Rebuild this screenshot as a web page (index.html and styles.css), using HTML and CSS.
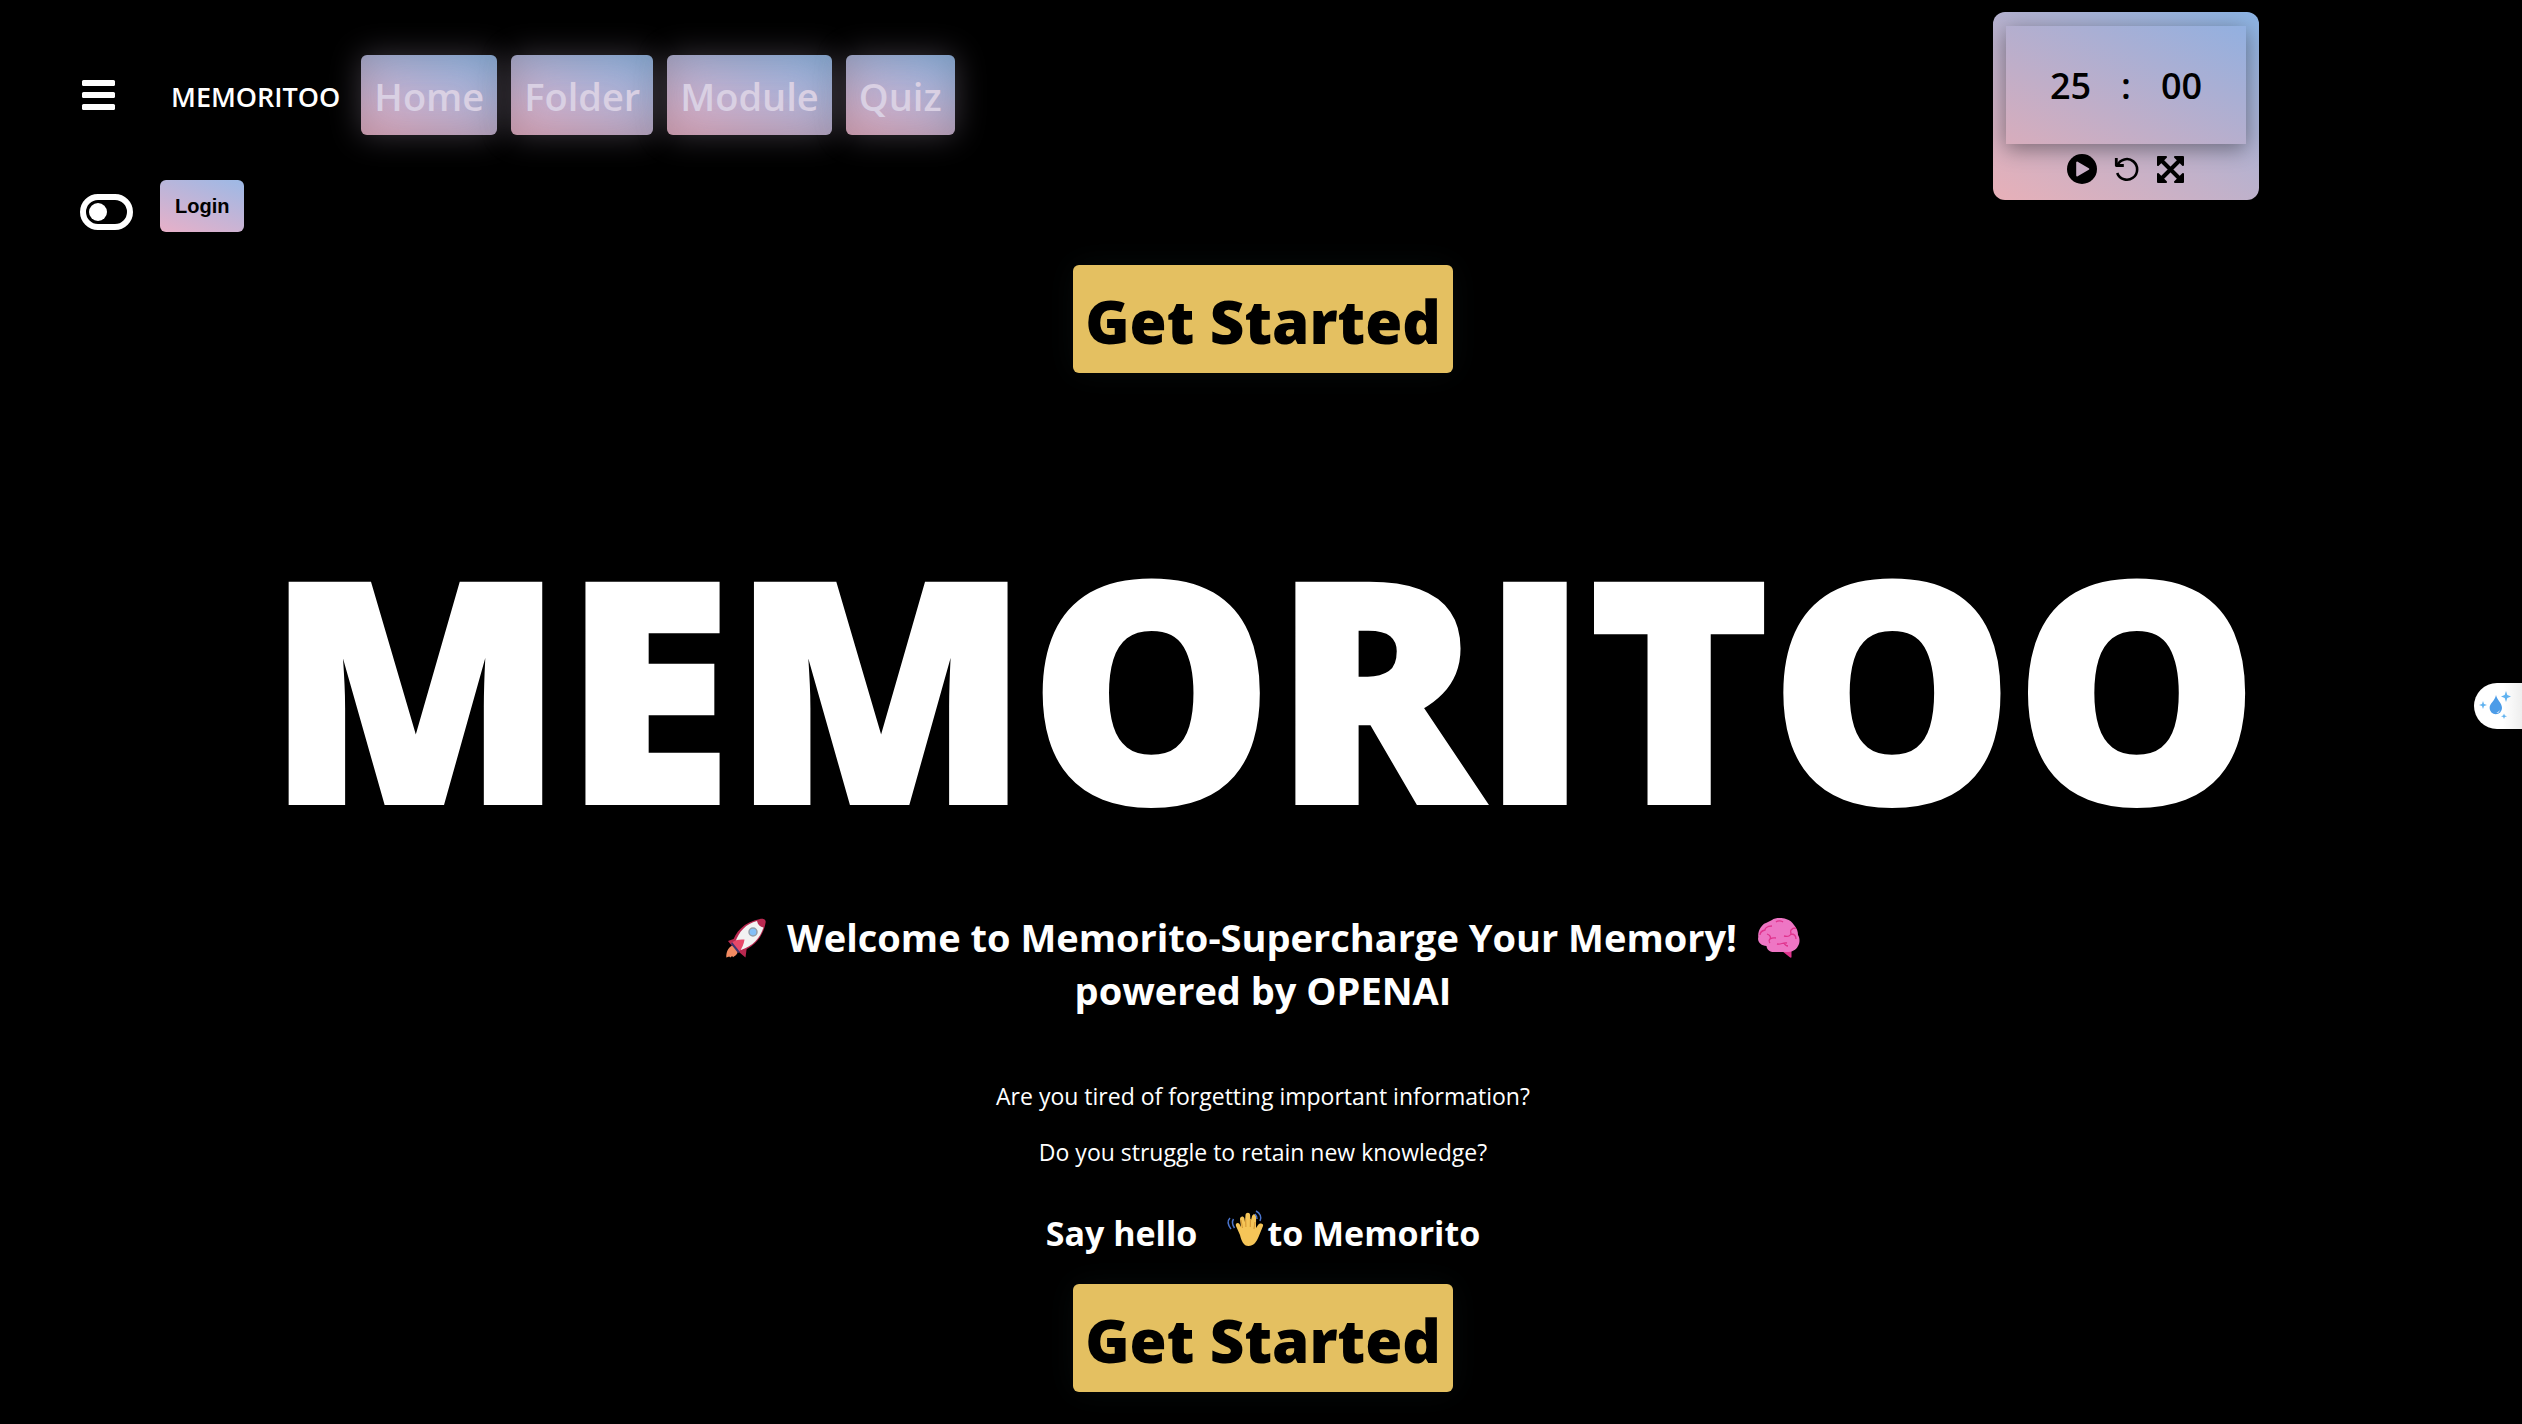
FILE: index.html
```
<!DOCTYPE html>
<html lang="en">
<head>
<meta charset="utf-8">
<meta name="viewport" content="width=device-width, initial-scale=1">
<title>MEMORITOO</title>
<link rel="stylesheet" href="styles.css">
</head>
<body>
<header class="header">
  <div class="header-left">
    <nav class="nav" aria-label="Main">
      <button class="icon-button" type="button" aria-label="Menu">
        <svg width="33" height="30" viewBox="0 0 33 30" fill="#fff"><rect y="0" width="33" height="6" rx="1.5"/><rect y="12" width="33" height="6" rx="1.5"/><rect y="24" width="33" height="6" rx="1.5"/></svg>
      </button>
      <span class="brand">MEMORITOO</span>
      <div class="nav-links">
        <a class="nav-link" href="#home">Home</a>
        <a class="nav-link" href="#folder">Folder</a>
        <a class="nav-link" href="#module">Module</a>
        <a class="nav-link" href="#quiz">Quiz</a>
      </div>
    </nav>
    <div class="account">
      <input class="theme-toggle" type="checkbox" aria-label="Light theme">
      <button class="login" type="button">Login</button>
    </div>
  </div>
  <section class="timer" aria-label="Timer">
    <div class="timer-face"><span>25</span><span>:</span><span>00</span></div>
    <div class="timer-controls">
      <button class="icon-button" type="button" aria-label="Start">
        <svg width="30" height="30" viewBox="0 0 30 30"><circle cx="15" cy="15" r="15"/><path d="M10.2 8.6v12.8L21.3 15z" fill="#c9afc6" stroke="#c9afc6" stroke-width="2" stroke-linejoin="round"/></svg>
      </button>
      <button class="icon-button" type="button" aria-label="Reset">
        <svg width="24" height="24" viewBox="0 0 24 24" fill="none" stroke="#000" stroke-width="2.6"><path d="M1.3 1v7.5h7.5" stroke-linejoin="round" stroke-width="2.8"/><path d="M2.4 8.3a10.3 10.3 0 1 1-.2 7.7"/></svg>
      </button>
      <button class="icon-button" type="button" aria-label="Full screen">
        <svg width="27" height="27" viewBox="0 0 27 27"><path d="M4 4l19 19M23 4L4 23" stroke="#000" stroke-width="4"/><path d="M1 1h8L1 9zM26 1v8l-8-8zM1 26v-8l8 8zM26 26h-8l8-8z" stroke="#000" stroke-width="2" stroke-linejoin="round"/></svg>
      </button>
    </div>
  </section>
</header>
<main class="hero">
  <button class="cta" type="button">Get Started</button>
  <h1 class="title">MEMORITOO</h1>
  <h2 class="welcome">
    <span class="welcome-line">
      <svg width="40" height="40" viewBox="0 0 40 40" role="img" aria-label="Rocket"><path d="M8 27c-5 1-8 6-7.700 12.500l3-1 .9 1.100 2-1.600.8 1.200C11 37 12.600 34 11.500 31z" fill="#f28b62"/><path d="M13 19L2 23l4 5 5 1zM21 28l-1.500 11.500-6-5-1-5z" fill="#b92850"/><path d="M6 26C9 14 18 4 34 1c3-.6 6 .5 5.700 3C37 20 27 30 14 34z" fill="#b92850"/><path d="M9 25C13 13 20 6 31 3c1 4 3 6 6.500 6.500C34 20 27 28 15 32z" fill="#f2f2f2"/><path d="M5 25c4-3 8-4 13.500-3.500C18 26 16 30 13 34.500z" fill="#e74869"/><path d="M6 24l8 10-2 1-7-9z" fill="#3d3270"/><circle cx="27" cy="14" r="4" fill="#83bff7" stroke="#929da8" stroke-width="1.500"/></svg>
      <span>Welcome to Memorito-Supercharge Your Memory!</span>
      <svg width="42" height="40" viewBox="0 0 42 40" role="img" aria-label="Brain"><path d="M24 33h9.500v6c0 1-1 1-2 0z" fill="#e0338d"/><path d="M14 2C17-.5 24-.5 28 1c4 1 6 3 8 6 3 3 4 7 4 10 2 3 2 8 0 11-2 4-6 6-11 6H16c-4 0-7-2-7.500-6C3 28-1 24 .3 19-.5 13 4 6 8 5c2-1 4-2 6-3z" fill="#ee76c4"/><g fill="none" stroke="#e0338d" stroke-width="1.300"><path d="M14 8c-6 0-7 3-7 4-4 1-5 3-5 5M18 4c2-2 6-1 7 0M38 10c-5 0-6 3-5 5 0 3-3 4-7 3M33 16c4 0 5 3 5 5M9 16c3 1 4 3 3 5 3-2 5-1 6-1M12 21c-1 1-1 3 0 4M19 26c4 1 6-2 10-1M26 25c1 2 2 3 4 3"/></g></svg>
    </span>
    <span>powered by OPENAI</span>
  </h2>
  <div class="questions">
    <p>Are you tired of forgetting important information?</p>
    <p>Do you struggle to retain new knowledge?</p>
  </div>
  <h3 class="hello">
    <span>Say hello</span>
    <svg class="wave" width="37" height="37" viewBox="0 0 37 37" role="img" aria-label="Waving hand"><path d="M13 25L9 16c-1-2.500 2-4 3.500-2L14 17 13 9c0-3 3.500-3.500 4.300-1l.7 4 .5-7c.3-3 4.500-3 4.600 0l.4 7 1.600-6c1-2.600 4.300-2 4 .8L29 18l2-3c2-2.500 6-1.500 5 1l-4.500 11c-2 5-5 9-10 9-5 0-7-5-8.500-11z" fill="#f5c558"/><path d="M14 10l1.500 8M18.600 9l.3 8M23.500 9l-.2 8M28 12l-1 7" stroke="#d89b38" stroke-width="1.200" fill="none"/><path d="M3 8c-3 3-2 7 1 11M6.500 9c-2 3-1 6 1 9M28 4c2 2 2 3 2 5M29 1c4 2 6 6 4 10" stroke="#4a74cc" stroke-width="1.500" fill="none"/></svg>
    <span>to Memorito</span>
  </h3>
  <button class="cta" type="button">Get Started</button>
</main>
<button class="side-tab" type="button" aria-label="Assistant">
  <svg width="32" height="28" viewBox="0 0 32 28" fill="#4c9ce8"><path d="M17 2c1 5 6 8 6 13a6.200 6.200 0 0 1-12.400 0C10.600 10 16 8 17 2z"/><path d="M20.500 14c1 4-1 5-3 5.500 2 1 4-1 3-5.500z" fill="#fff"/><path d="M27-2l1.300 4L32 3.500 28.300 5 27 9l-1.300-4L22 3.500 25.700 2zM4 8l1 3 3 1-3 1-1 3-1-3-3-1 3-1zM25 20.500l.8 2 2.200.8-2.200.8-.8 2-.8-2-2.200-.8 2.200-.8z" fill="#5fb2f0"/></svg>
</button>
</body>
</html>
```
FILE: styles.css
```
* { box-sizing: border-box; }

body {
  margin: 0;
  min-height: 100vh;
  background: #000;
  color: #fff;
  font-family: "Open Sans", "Noto Sans", sans-serif;
  border-bottom: 1px solid #3a2a36;
}

button {
  margin: 0;
  border: 0;
  font-family: inherit;
  cursor: pointer;
}

svg {
  display: block;
  flex: none;
  overflow: visible;
}

h1, h2, h3, p { margin: 0; }

.icon-button {
  padding: 0;
  background: none;
}

.header {
  display: flex;
  justify-content: space-between;
  align-items: flex-start;
  padding: 12px 263px 0 80px;
}

.header-left {
  display: flex;
  flex-direction: column;
  gap: 45px;
  padding-top: 43px;
}

.nav {
  display: flex;
  align-items: center;
  padding-left: 2px;
}

.brand {
  margin: 0 21px 0 56px;
  padding-top: 3px;
  font-size: 27px;
  font-weight: 600;
  line-height: 40px;
}

.nav-links {
  display: flex;
  gap: 14px;
}

.nav-link {
  padding: 11px 13px 9px;
  border-radius: 6px;
  background: linear-gradient(20deg, #e4abbf, #8eb5e3);
  box-shadow: 0 0 32px rgba(216, 196, 226, .28), inset 0 0 40px rgba(70, 70, 80, .32);
  color: #d9d0e3;
  font-size: 38px;
  font-weight: 600;
  line-height: 60px;
  text-decoration: none;
}

.account {
  display: flex;
  align-items: flex-end;
  gap: 27px;
}

.theme-toggle {
  appearance: none;
  display: flex;
  align-items: center;
  width: 53px;
  height: 36px;
  margin: 0 0 2px;
  padding-left: 3px;
  border: 6px solid #fff;
  border-radius: 18px;
}

.theme-toggle::before {
  content: "";
  width: 18px;
  height: 18px;
  border-radius: 50%;
  background: #fff;
}

.theme-toggle:checked {
  justify-content: flex-end;
  padding: 0 3px 0 0;
}

.login {
  padding: 0 15px;
  border-radius: 6px;
  background: linear-gradient(20deg, #e8b0c8, #9cb9e6);
  color: #000;
  font: bold 20px/52px "Liberation Sans", sans-serif;
}

.timer {
  padding: 14px 13px 16px;
  border-radius: 12px;
  background: linear-gradient(30deg, #e8b0b8, #8bb3e3);
  color: #000;
}

.timer-face {
  display: flex;
  justify-content: center;
  gap: 30px;
  width: 240px;
  padding: 35px 0 33px;
  box-shadow: 0 5px 20px rgba(0, 0, 0, .4);
  background: linear-gradient(25deg, #d8adbc, #92b0e0);
  font-size: 36px;
  font-weight: 600;
  line-height: 50px;
}

.timer-controls {
  display: flex;
  justify-content: center;
  align-items: center;
  gap: 18px;
  padding: 10px 2px 0 0;
}

.hero {
  display: flex;
  flex-direction: column;
  align-items: center;
  padding: 33px 0 32px 4px;
}

.cta {
  padding: 14px 12px 10px;
  border-radius: 6px;
  background: #e4c061;
  box-shadow: 0 0 32px rgba(40, 80, 80, .14);
  color: #000;
  font-size: 60px;
  font-weight: 800;
  line-height: 84px;
}

.title {
  margin-top: 159px;
  font-size: 307px;
  font-weight: 800;
  line-height: 305px;
  -webkit-text-stroke: 4px #fff;
}

.welcome {
  display: flex;
  flex-direction: column;
  align-items: center;
  margin-top: 74px;
  font-size: 38px;
  line-height: 53px;
}

.welcome-line {
  display: flex;
  align-items: center;
  gap: 21px;
}

.questions {
  display: grid;
  gap: 24px;
  margin-top: 63px;
  font-size: 23px;
  line-height: 32px;
  text-align: center;
}

.hello {
  display: flex;
  align-items: flex-start;
  margin: 41px 0 27px;
  font-size: 34px;
  line-height: 48px;
}

.wave { margin: 1px 3px 0 30px; }

.side-tab {
  position: fixed;
  top: 683px;
  right: 0;
  width: 48px;
  height: 46px;
  padding: 10px 5px;
  border-radius: 23px 0 0 23px;
  background: linear-gradient(90deg, #fff 60%, #eee);
}
```
